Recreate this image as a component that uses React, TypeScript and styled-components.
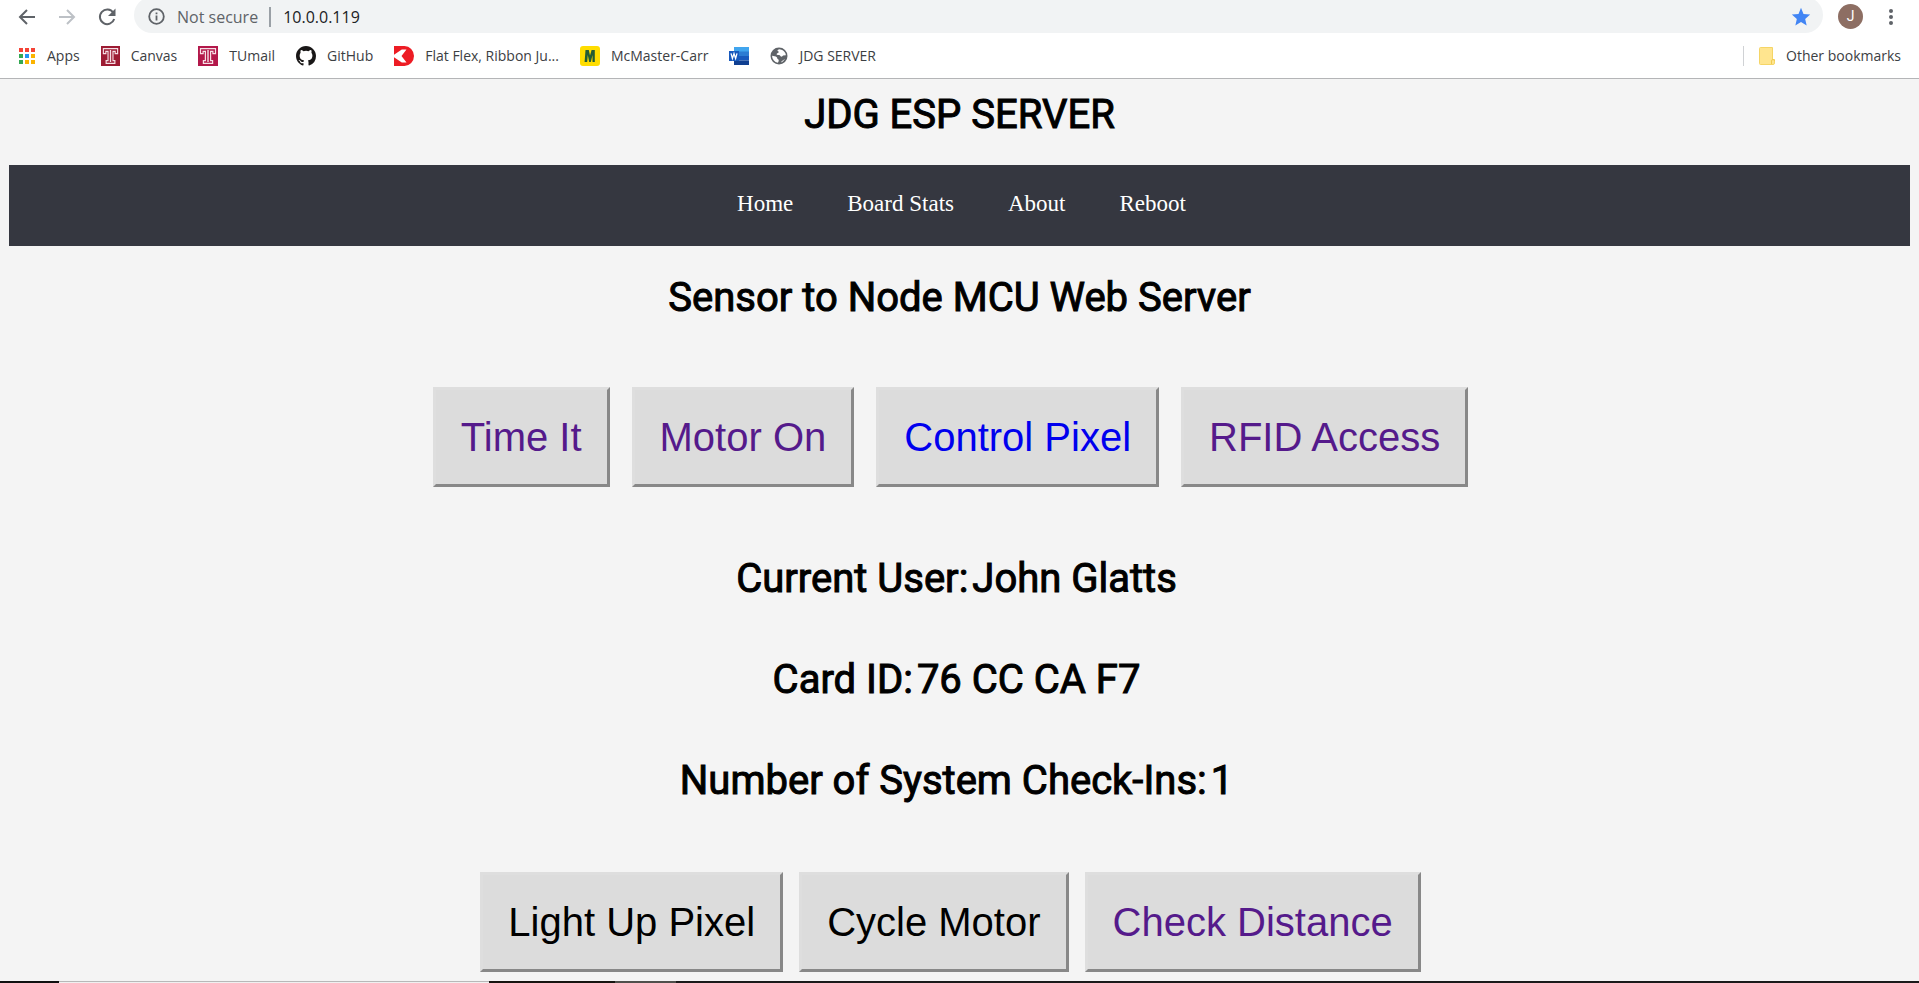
import React from "react";
import styled, { createGlobalStyle } from "styled-components";

const GlobalStyle = createGlobalStyle`
  *, *::before, *::after { box-sizing: border-box; }
  body { margin: 0; background: #f4f4f4; }
`;

const Screen = styled.div`
  min-height: 100vh;
  display: flex;
  flex-direction: column;
`;

const BrowserChrome = styled.header`
  background: #fff;
  border-bottom: 1px solid #b4b5b7;
  font-family: "Open Sans", "Noto Sans", sans-serif;
  color: #3c4043;
  overflow: hidden;
`;

const Toolbar = styled.div`
  display: flex;
  align-items: center;
  height: 33px;
  padding: 0 20px 0 16px;
`;

const IconButton = styled.button`
  display: flex;
  padding: 0;
  border: 0;
  background: none;
  color: #5f6368;
`;

const NavButtons = styled.div`
  display: flex;
  gap: 18px;
  width: 118px;
`;

const AddressBar = styled.div`
  flex: 1;
  display: flex;
  align-items: center;
  height: 36px;
  margin-top: -3px;
  padding: 3px 12px 0 14px;
  border-radius: 18px;
  background: #f1f3f4;
  font-size: 16px;
`;

const Security = styled.span`
  margin-left: 12px;
  padding-right: 11px;
  border-right: 2px solid #9aa0a6;
  line-height: 20px;
  color: #5f6368;
  white-space: nowrap;
`;

const AddressInput = styled.input`
  flex: 1;
  min-width: 0;
  padding: 0 0 0 12px;
  border: 0;
  background: none;
  font: inherit;
  line-height: 20px;
  color: #202124;
`;

const Avatar = styled.button`
  width: 25px;
  height: 25px;
  margin: 0 20px 0 15px;
  padding: 0;
  border: 0;
  border-radius: 50%;
  background: #8d6e63;
  color: #fff;
  font: 14px/25px Roboto, sans-serif;
`;

const BookmarksBar = styled.nav`
  display: flex;
  align-items: center;
  gap: 21px;
  height: 45px;
  padding: 0 18px;
`;

const Bookmark = styled.a`
  display: flex;
  align-items: center;
  gap: 11px;
  font-size: 14px;
  line-height: 20px;
  color: inherit;
  text-decoration: none;
  white-space: nowrap;
`;

const OtherBookmarks = styled.div`
  margin-left: auto;
  padding-left: 15px;
  border-left: 1px solid #d0d2d5;
`;

const Page = styled.main`
  display: flex;
  flex-direction: column;
  margin: 12px 9px 9px;
`;

const Heading = styled.h1`
  margin: 0;
  text-align: center;
  font: 400 40px/48px Roboto, sans-serif;
  -webkit-text-stroke: 1px #000;
  color: #000;
`;

const Menu = styled.nav`
  display: flex;
  justify-content: center;
  gap: 54px;
  height: 81px;
  margin: 26px 0 28px;
  padding: 26px 0 0 4px;
  background: #353740;
`;

const MenuLink = styled.a`
  font: 23px/26px "Liberation Serif", serif;
  color: #fff;
  text-decoration: none;
`;

const ButtonRow = styled.div<{ $gap: number }>`
  display: flex;
  justify-content: center;
  gap: ${(p) => p.$gap}px;
  padding-right: 18px;
`;

const buttonColors = { visited: "#551a8b", link: "#0000ee", plain: "#000" };

const ActionButton = styled.button<{ $tone: keyof typeof buttonColors }>`
  padding: 24px 25px;
  border: 3px solid;
  border-color: #dedede #888 #888 #dedede;
  background: #dcdcdc;
  font: 40px/46px "Liberation Sans", sans-serif;
  color: ${(p) => buttonColors[p.$tone]};
  white-space: nowrap;
`;

const Controls = styled.section`
  margin-top: 65px;
`;

const Readings = styled.section`
  display: flex;
  flex-direction: column;
  gap: 53px;
  margin: 68px 0 67px;
`;

const Reading = styled(Heading)`
  display: flex;
  justify-content: center;
  gap: 4px;
  padding-right: 6px;
`;

const Taskbar = styled.footer`
  display: grid;
  grid-template-columns: 59px 430px 126px 61px 1fr;
  height: 2px;
  margin-top: auto;
`;

const TaskbarPart = styled.span<{ $color: string }>`
  background: ${(p) => p.$color};
`;

const AppsIcon = () => {
  const colors = ["#f44336", "#f44336", "#f44336", "#34a853", "#2196f3", "#fbb300", "#34a853", "#fbb300", "#fbb300"];
  return (
    <svg width="18" height="18" viewBox="0 0 18 18">
      {colors.map((c, i) => (
        <rect key={i} x={1 + (i % 3) * 6} y={1 + Math.floor(i / 3) * 6} width="4" height="4" fill={c} />
      ))}
    </svg>
  );
};

const TempleIcon = ({ color, width }: { color: string; width: number }) => (
  <svg width={width} height="20" viewBox="0 0 20 20" preserveAspectRatio="none">
    <path fill={color} d="M0 0h20v20H0z" />
    <path fill="none" stroke="#f6dfe5" strokeWidth="1.2" d="M2.5 2.6h15v5h-2.6V5.4h-2.3v9.3h2v2.7H5.4v-2.7h2V5.4H5.1v2.2H2.5z" />
    <path stroke="#f6dfe5" strokeWidth="1.4" d="M10 4v12" />
  </svg>
);

const GitHubIcon = () => (
  <svg width="20" height="20" viewBox="0 0 16 16">
    <path fill="#191717" d="M8 0C3.58 0 0 3.58 0 8c0 3.54 2.29 6.53 5.47 7.59.4.07.55-.17.55-.38 0-.19-.01-.82-.01-1.49-2.01.37-2.53-.49-2.69-.94-.09-.23-.48-.94-.82-1.13-.28-.15-.68-.52-.01-.53.63-.01 1.08.58 1.23.82.72 1.21 1.87.87 2.33.66.07-.52.28-.87.51-1.07-1.78-.2-3.64-.89-3.64-3.95 0-.87.31-1.59.82-2.15-.08-.2-.36-1.02.08-2.12 0 0 .67-.21 2.2.82a7.6 7.6 0 0 1 4 0c1.53-1.04 2.2-.82 2.2-.82.44 1.1.16 1.92.08 2.12.51.56.82 1.27.82 2.15 0 3.07-1.87 3.75-3.65 3.95.29.25.54.73.54 1.48 0 1.07-.01 1.93-.01 2.2 0 .21.15.46.55.38A8.01 8.01 0 0 0 16 8c0-4.42-3.58-8-8-8z" />
  </svg>
);

const DigiKeyIcon = () => (
  <svg width="20" height="20" viewBox="0 0 20 20">
    <path fill="#ed1c24" d="M0 0h10.500a9.500 10 0 0 1 0 20H0z" />
    <path fill="#fff" d="M0 8.800 7.800 3.500h4.700L7.500 10l5 6.500H7.800L0 11.200z" />
  </svg>
);

const McMasterIcon = () => (
  <svg width="20" height="20" viewBox="0 0 20 20">
    <rect width="20" height="20" rx="3" fill="#ffdd00" />
    <path fill="#235c35" d="M5.5 4h3.3L10 9.5 11.6 4h3.2v12h-2.3V9l-1.7 7H9.2L7.8 9l-.6 7H4.6z" />
  </svg>
);

const WordIcon = () => (
  <svg width="20" height="20" viewBox="0 0 20 20">
    <path fill="#41a5ee" d="M5 1h15v5H5z" />
    <path fill="#2b7cd3" d="M5 5.500h15V10H5z" />
    <path fill="#185abd" d="M5 10h15v4.500H5z" />
    <path fill="#103f91" d="M5 14.500h15V19H5z" />
    <path fill="#185abd" d="M0 5h10v10H0z" />
    <path fill="none" stroke="#fff" strokeWidth="1.3" d="m2 7.300 1.400 5.200L5 7.600l1.600 4.900L8 7.300" />
  </svg>
);

const GlobeIcon = () => (
  <svg width="18" height="18" viewBox="0 0 18 18">
    <circle cx="9" cy="9" r="8.500" fill="#5f6368" />
    <path fill="#fff" d="M9.5 2.2C7 2.5 7.2 4 8.5 4.5c1 .5-.5 1.500-1.500 1.900-.8.500-.3 1.500.8 1.500 2 0 2.300.3 2.800 1.300.6.900 2 .3 2.400-.7l2.900-.3a6.900 6.900 0 0 0-3.700-5.300zM2.100 8.700c1.400.4 3.700.4 4.700 1.500.8.8 0 1.500 1.200 2 1.300.5.700 2.400-.1 3.600a6.900 6.900 0 0 1-5.800-7.100zM11.200 15.500c.2-1 .7-1.500 1.700-1.900.8-.4.900-1.200 1.900-1.600a7 7 0 0 1-3.600 3.500z" />
  </svg>
);

const FolderIcon = () => (
  <svg width="16" height="18" viewBox="0 0 16 18">
    <path fill="#ffe58f" stroke="#f5d566" d="M1.500.5h12v12h2v3.500a1.500 1.500 0 0 1-1.500 1.500H1.500a1 1 0 0 1-1-1v-15a1 1 0 0 1 1-1z" />
    <path fill="none" stroke="#f0cb4f" d="M12.500 17v-3a1.500 1.500 0 0 1 3 0" />
  </svg>
);

const ArrowIcon = ({ forward, color }: { forward?: boolean; color: string }) => (
  <svg width="22" height="22" viewBox="0 0 22 22">
    <path fill="none" stroke={color} strokeWidth="2" d={forward ? "M3 11h15M11 4l7 7-7 7" : "M19 11H4M11 4l-7 7 7 7"} />
  </svg>
);

const ReloadIcon = () => (
  <svg width="22" height="22" viewBox="0 0 22 22">
    <path fill="none" stroke="#5f6368" strokeWidth="2" d="M17.300 6.800A7.300 7.300 0 1 0 18.200 13" />
    <path fill="#5f6368" d="M19.500 2.500V10H12z" />
  </svg>
);

const InfoIcon = () => (
  <svg width="17" height="17" viewBox="0 0 17 17">
    <circle cx="8.500" cy="8.500" r="7.300" fill="none" stroke="#5f6368" strokeWidth="1.8" />
    <path fill="#5f6368" d="M7.600 4.400h1.800v1.800H7.600zM7.600 7.600h1.800v5H7.600z" />
  </svg>
);

const StarIcon = () => (
  <svg width="20" height="20" viewBox="0 0 24 24">
    <path fill="#4285f4" d="m12 18 6.800 4.300-1.800-8 6-5.300-8-.7L12 1 9 8.300 1 9l6 5.300-1.800 8z" />
  </svg>
);

const MoreIcon = () => (
  <svg width="16" height="20" viewBox="0 0 16 20">
    {[4, 10, 16].map((y) => (
      <circle key={y} cx="8" cy={y} r="2" fill="#5f6368" />
    ))}
  </svg>
);

const bookmarks = [
  { label: "Apps", icon: <AppsIcon /> },
  { label: "Canvas", icon: <TempleIcon color="#9d1b33" width={19} /> },
  { label: "TUmail", icon: <TempleIcon color="#b3184a" width={20} /> },
  { label: "GitHub", icon: <GitHubIcon /> },
  { label: "Flat Flex, Ribbon Ju...", icon: <DigiKeyIcon /> },
  { label: "McMaster-Carr", icon: <McMasterIcon /> },
  { label: "", icon: <WordIcon /> },
  { label: "JDG SERVER", icon: <GlobeIcon /> },
];

const readings = [
  ["Current User:", "John Glatts"],
  ["Card ID:", "76 CC CA F7"],
  ["Number of System Check-Ins:", "1"],
];

export default function App() {
  return (
    <Screen>
      <GlobalStyle />
      <BrowserChrome>
        <Toolbar>
          <NavButtons>
            <IconButton aria-label="Back"><ArrowIcon color="#5f6368" /></IconButton>
            <IconButton aria-label="Forward"><ArrowIcon forward color="#bdc1c6" /></IconButton>
            <IconButton aria-label="Reload"><ReloadIcon /></IconButton>
          </NavButtons>
          <AddressBar>
            <InfoIcon />
            <Security>Not secure</Security>
            <AddressInput aria-label="Address" defaultValue="10.0.0.119" />
            <IconButton aria-label="Bookmark this page"><StarIcon /></IconButton>
          </AddressBar>
          <Avatar>J</Avatar>
          <IconButton aria-label="Menu"><MoreIcon /></IconButton>
        </Toolbar>
        <BookmarksBar>
          {bookmarks.map((b) => (
            <Bookmark key={b.label} href="#" aria-label={b.label || "Word"}>
              {b.icon}
              {b.label}
            </Bookmark>
          ))}
          <OtherBookmarks>
            <Bookmark href="#"><FolderIcon />Other bookmarks</Bookmark>
          </OtherBookmarks>
        </BookmarksBar>
      </BrowserChrome>
      <Page>
        <Heading>JDG ESP SERVER</Heading>
        <Menu>
          {["Home", "Board Stats", "About", "Reboot"].map((t) => (
            <MenuLink key={t} href="#">{t}</MenuLink>
          ))}
        </Menu>
        <Heading as="h2">Sensor to Node MCU Web Server</Heading>
        <Controls>
          <ButtonRow $gap={22}>
            <ActionButton $tone="visited">Time It</ActionButton>
            <ActionButton $tone="visited">Motor On</ActionButton>
            <ActionButton $tone="link">Control Pixel</ActionButton>
            <ActionButton $tone="visited">RFID Access</ActionButton>
          </ButtonRow>
          <Readings>
            {readings.map(([label, value]) => (
              <Reading as="h2" key={label}>
                <span>{label}</span>
                <span>{value}</span>
              </Reading>
            ))}
          </Readings>
          <ButtonRow $gap={16}>
            <ActionButton $tone="plain">Light Up Pixel</ActionButton>
            <ActionButton $tone="plain">Cycle Motor</ActionButton>
            <ActionButton $tone="visited">Check Distance</ActionButton>
          </ButtonRow>
        </Controls>
      </Page>
      <Taskbar>
        <TaskbarPart $color="#101010" />
        <TaskbarPart $color="linear-gradient(#b8b8b8 50%, #f0f0f0 50%)" />
        <TaskbarPart $color="#171410" />
        <TaskbarPart $color="#50504c" />
        <TaskbarPart $color="#1a1a1a" />
      </Taskbar>
    </Screen>
  );
}
